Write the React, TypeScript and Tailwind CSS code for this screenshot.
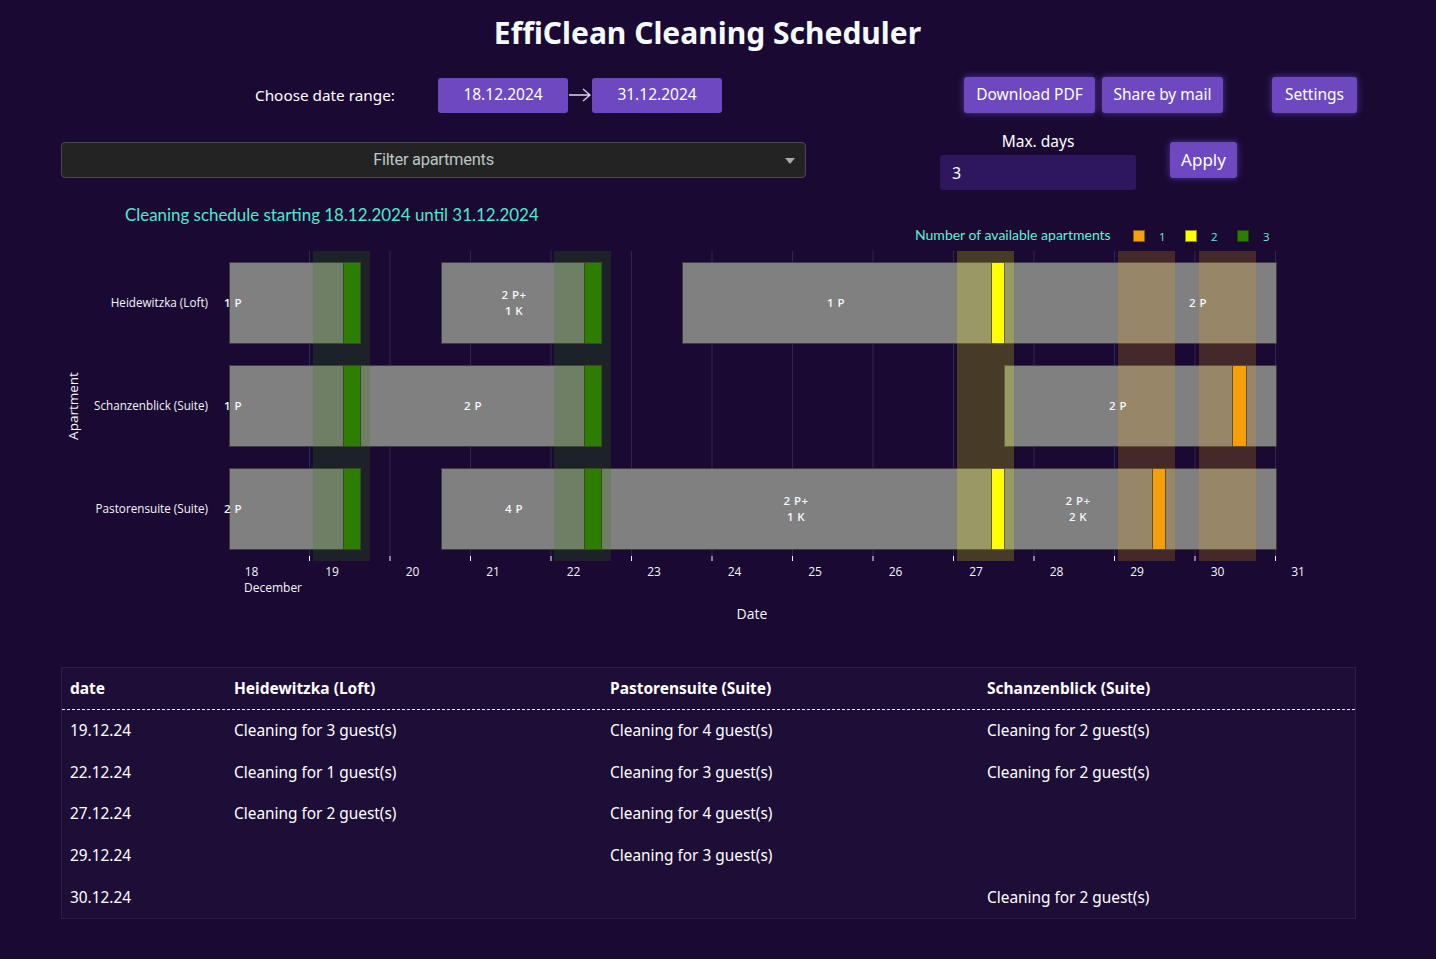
import React from 'react';

type Bar = { x0: number; x1: number; label?: string[]; lx?: number };

const ROWS = [
  { name: 'Heidewitzka (Loft)', y: 262 },
  { name: 'Schanzenblick (Suite)', y: 365 },
  { name: 'Pastorensuite (Suite)', y: 468 },
];
const BAR_H = 81;

const GREEN = '#2e7d00';
const YELLOW = '#ffff00';
const ORANGE = '#f5a10b';

const bars: Bar[][] = [
  [
    { x0: 229, x1: 360, label: ['1 P'], lx: 233 },
    { x0: 441, x1: 601, label: ['2 P+', '1 K'], lx: 514 },
    { x0: 682, x1: 1004, label: ['1 P'], lx: 836 },
    { x0: 1004, x1: 1276, label: ['2 P'], lx: 1198 },
  ],
  [
    { x0: 229, x1: 360, label: ['1 P'], lx: 233 },
    { x0: 360, x1: 601, label: ['2 P'], lx: 473 },
    { x0: 1004, x1: 1276, label: ['2 P'], lx: 1118 },
  ],
  [
    { x0: 229, x1: 360, label: ['2 P'], lx: 233 },
    { x0: 441, x1: 601, label: ['4 P'], lx: 514 },
    { x0: 601, x1: 1004, label: ['2 P+', '1 K'], lx: 796 },
    { x0: 1004, x1: 1165, label: ['2 P+', '2 K'], lx: 1078 },
    { x0: 1165, x1: 1276 },
  ],
];

const cleanings = [
  { row: 0, x0: 343, x1: 360, c: GREEN },
  { row: 1, x0: 343, x1: 360, c: GREEN },
  { row: 2, x0: 343, x1: 360, c: GREEN },
  { row: 0, x0: 584, x1: 601, c: GREEN },
  { row: 1, x0: 584, x1: 601, c: GREEN },
  { row: 2, x0: 584, x1: 601, c: GREEN },
  { row: 0, x0: 991, x1: 1004, c: YELLOW },
  { row: 2, x0: 991, x1: 1004, c: YELLOW },
  { row: 1, x0: 1232, x1: 1246, c: ORANGE },
  { row: 2, x0: 1152, x1: 1165, c: ORANGE },
];

const bands = [
  { x0: 313, x1: 370, c: GREEN },
  { x0: 554, x1: 611, c: GREEN },
  { x0: 957, x1: 1014, c: YELLOW },
  { x0: 1118, x1: 1175, c: ORANGE },
  { x0: 1199, x1: 1256, c: ORANGE },
];

const ticks = Array.from({ length: 13 }, (_, i) => 309.5 + i * 80.5);
const days = Array.from({ length: 14 }, (_, i) => ({ d: 18 + i, x: 251.5 + i * 80.5 }));

const tableRows = [
  ['19.12.24', 'Cleaning for 3 guest(s)', 'Cleaning for 4 guest(s)', 'Cleaning for 2 guest(s)'],
  ['22.12.24', 'Cleaning for 1 guest(s)', 'Cleaning for 3 guest(s)', 'Cleaning for 2 guest(s)'],
  ['27.12.24', 'Cleaning for 2 guest(s)', 'Cleaning for 4 guest(s)', ''],
  ['29.12.24', '', 'Cleaning for 3 guest(s)', ''],
  ['30.12.24', '', '', 'Cleaning for 2 guest(s)'],
];

const btn =
  'flex items-center justify-center rounded-[3px] bg-[#6d48c0] text-[15.5px] text-white shadow-[0_0_7px_rgba(130,90,230,0.55)]';

const Schedule = () => (
  <svg width={1436} height={450} className="block font-['Open_Sans',sans-serif]">
    <g transform="translate(0,-195)">
      <text x={125} y={221} fill="#52e6cf" fontSize={16.9} fontFamily="Lato, sans-serif">
        Cleaning schedule starting 18.12.2024 until 31.12.2024
      </text>

      {/* legend */}
      <text x={915} y={240} fill="#5eefd8" fontSize={14} fontFamily="Lato, sans-serif">
        Number of available apartments
      </text>
      <rect x={1133.5} y={230.5} width={11} height={11} fill={ORANGE} stroke="#8a5a00" />
      <text x={1159} y={241} fill="#5eefd8" fontSize={11.5}>1</text>
      <rect x={1185.5} y={230.5} width={11} height={11} fill={YELLOW} stroke="#8a8a00" />
      <text x={1211} y={241} fill="#5eefd8" fontSize={11.5}>2</text>
      <rect x={1237.5} y={230.5} width={11} height={11} fill={GREEN} stroke="#1a4a00" />
      <text x={1263} y={241} fill="#5eefd8" fontSize={11.5}>3</text>

      {/* grid */}
      {ticks.map(t => (
        <line key={t} x1={t} x2={t} y1={251} y2={556} stroke="#2b2950" strokeWidth={1} />
      ))}

      {/* bars */}
      {bars.map((row, ri) =>
        row.map((b, bi) => (
          <rect
            key={`${ri}-${bi}`}
            x={b.x0 + 0.5}
            y={ROWS[ri].y + 0.5}
            width={b.x1 - b.x0}
            height={BAR_H}
            fill="#808080"
            stroke="#3d3d3d"
            strokeWidth={1}
          />
        ))
      )}
      {cleanings.map((c, i) => (
        <rect
          key={i}
          x={c.x0 + 0.5}
          y={ROWS[c.row].y + 0.5}
          width={c.x1 - c.x0}
          height={BAR_H}
          fill={c.c}
          stroke="#3d3d2a"
          strokeWidth={1}
        />
      ))}
      {bands.map((b, i) => (
        <rect key={i} x={b.x0} y={251} width={b.x1 - b.x0} height={310} fill={b.c} fillOpacity={0.2} />
      ))}

      {/* bar labels */}
      {bars.map((row, ri) =>
        row.map((b, bi) =>
          b.label ? (
            <text
              key={`l-${ri}-${bi}`}
              x={b.lx}
              y={ROWS[ri].y + 45 - (b.label.length - 1) * 8}
              fill="#f5f8ff"
              fontSize={11.5}
              fontWeight={600}
              letterSpacing={0.4}
              textAnchor="middle"
            >
              {b.label.map((l, li) => (
                <tspan key={li} x={b.lx} dy={li === 0 ? 0 : 16}>
                  {l}
                </tspan>
              ))}
            </text>
          ) : null
        )
      )}

      {/* y axis */}
      {ROWS.map(r => (
        <text key={r.name} x={208} y={r.y + 44.5} fill="#f2f5fa" fontSize={11.7} textAnchor="end">
          {r.name}
        </text>
      ))}
      <text
        x={0}
        y={0}
        fill="#f2f5fa"
        fontSize={13.5}
        textAnchor="middle"
        transform="translate(78,406) rotate(-90)"
      >
        Apartment
      </text>

      {/* x axis */}
      {ticks.map(t => (
        <line key={`t${t}`} x1={t} x2={t} y1={556} y2={561} stroke="#f2f5fa" strokeWidth={1} />
      ))}
      {days.map(d => (
        <text key={d.d} x={d.x} y={576} fill="#f2f5fa" fontSize={12} textAnchor="middle">
          {d.d}
        </text>
      ))}
      <text x={244} y={592} fill="#f2f5fa" fontSize={12}>
        December
      </text>
      <text x={752} y={619} fill="#f2f5fa" fontSize={14} textAnchor="middle">
        Date
      </text>
    </g>
  </svg>
);

export default function App() {
  return (
    <div className="min-h-screen w-full bg-[#1a0a33] pb-[40px] font-['Noto_Sans',sans-serif] text-white">
      <h1 className="pr-[21px] pt-[11px] text-center text-[30px] font-bold leading-[44px] text-[#f4fbff]">
        EffiClean Cleaning Scheduler
      </h1>

      <div className="mt-[22px] flex h-[36px] items-center">
        <div className="ml-[255px] w-[183px] text-[15.3px]">Choose date range:</div>
        <div className={`${btn} h-[35px] w-[130px] shadow-none`}>18.12.2024</div>
        <div className="flex w-[24px] justify-center">
          <svg width="24" height="14" viewBox="0 0 24 14">
            <path d="M1 7h21M15 1l7 6-7 6" fill="none" stroke="#d8d8e8" strokeWidth="1.3" />
          </svg>
        </div>
        <div className={`${btn} h-[35px] w-[130px] shadow-none`}>31.12.2024</div>
        <div className={`${btn} ml-[242px] h-[36px] w-[131px]`}>Download PDF</div>
        <div className={`${btn} ml-[7px] h-[36px] w-[121px]`}>Share by mail</div>
        <div className={`${btn} ml-[49px] h-[36px] w-[85px]`}>Settings</div>
      </div>

      <div className="mt-[17px] flex items-start">
        <div className="relative ml-[61px] mt-[12px] flex h-[36px] w-[745px] items-center justify-center rounded-[4px] border border-[#4a4a4a] bg-[#232323]">
          <span className="font-['Roboto',sans-serif] text-[16.5px] tracking-[-0.3px] text-[#b9c6c6]">
            Filter apartments
          </span>
          <svg className="absolute right-[10px] top-[15px]" width="10" height="6" viewBox="0 0 10 6">
            <path d="M0 0h10L5 6z" fill="#aaaaaa" />
          </svg>
        </div>
        <div className="ml-[134px] w-[196px]">
          <div className="h-[24px] text-center text-[15.5px] leading-[22px]">Max. days</div>
          <div className="mt-[1px] flex h-[35px] items-center rounded-[3px] bg-[#2f1760] pl-[12px] text-[16px]">3</div>
        </div>
        <div className={`${btn} ml-[34px] mt-[12px] h-[36px] w-[67px] text-[17px]`}>Apply</div>
      </div>

      <div className="mt-[5px]">
        <Schedule />
      </div>

      <div className="ml-[61px] mt-[22px] w-[1295px] border border-[#2c1e4c] bg-[#1d0e37]">
        <div className="flex h-[42px] items-center border-b border-dashed border-[#e8e8f0] text-[15.5px] font-bold">
          <div className="w-[164px] pl-[8px]">date</div>
          <div className="w-[376px] pl-[8px]">Heidewitzka (Loft)</div>
          <div className="w-[377px] pl-[8px]">Pastorensuite (Suite)</div>
          <div className="flex-1 pl-[8px]">Schanzenblick (Suite)</div>
        </div>
        {tableRows.map(r => (
          <div key={r[0]} className="flex h-[41.6px] items-center text-[15.4px]">
            <div className="w-[164px] pl-[8px]">{r[0]}</div>
            <div className="w-[376px] pl-[8px]">{r[1]}</div>
            <div className="w-[377px] pl-[8px]">{r[2]}</div>
            <div className="flex-1 pl-[8px]">{r[3]}</div>
          </div>
        ))}
      </div>
    </div>
  );
}
